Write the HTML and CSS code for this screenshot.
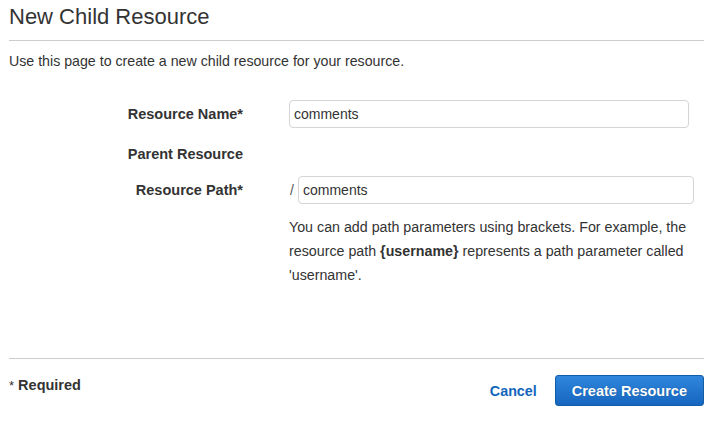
FILE: index.html
```html
<!DOCTYPE html>
<html lang="en">
<head>
<meta charset="utf-8">
<title>New Child Resource</title>
<link rel="stylesheet" href="styles.css">
</head>
<body>
<div class="page">
  <h1 class="title">New Child Resource</h1>
  <p class="intro">Use this page to create a new child resource for your resource.</p>
  <form class="form">
    <div class="row row-name">
      <label class="label" for="rname">Resource Name*</label>
      <div class="field"><input id="rname" class="input" type="text" value="comments"></div>
    </div>
    <div class="row row-parent">
      <span class="label">Parent Resource</span>
      <div class="field"></div>
    </div>
    <div class="row row-path">
      <label class="label" for="rpath">Resource Path*</label>
      <div class="field path-field"><span class="slash">/</span><input id="rpath" class="input path-input" type="text" value="comments"></div>
    </div>
    <div class="row row-help">
      <span class="label"></span>
      <p class="help">You can add path parameters using brackets. For example, the resource path <b class="code">{username}</b> represents a path parameter called 'username'.</p>
    </div>
  </form>
  <div class="footer">
    <div class="required"><span class="star">*</span> Required</div>
    <div class="actions">
      <button class="btn-cancel" type="button">Cancel</button>
      <button class="btn-primary" type="button">Create Resource</button>
    </div>
  </div>
</div>
</body>
</html>
```

FILE: styles.css
```css
html, body {
  margin: 0;
  padding: 0;
  background: #ffffff;
}

body {
  font-family: "Liberation Sans", Arial, sans-serif;
  color: #333333;
  font-size: 14px;
}

.page {
  padding: 0 19px 0 9px;
}

.title {
  margin: 0;
  padding: 4px 0 10px;
  font-size: 22px;
  line-height: 26px;
  font-weight: normal;
  color: #333333;
  border-bottom: 1px solid #cccccc;
}

.intro {
  margin: 11px 0 0;
  font-size: 14.2px;
  line-height: 18px;
}

.form {
  display: flex;
  flex-direction: column;
}

.row {
  display: flex;
  align-items: center;
  column-gap: 46px;
}

.label {
  width: 234px;
  flex: none;
  text-align: right;
  font-weight: bold;
  font-size: 14.5px;
  line-height: 20px;
}

.field {
  display: flex;
  align-items: center;
}

.row-name {
  margin-top: 30px;
}

.row-parent {
  margin-top: 16px;
}

.row-path {
  margin-top: 12px;
}

.row-help {
  margin-top: 11px;
  align-items: flex-start;
}

.input {
  box-sizing: border-box;
  width: 400px;
  height: 28px;
  margin: 0;
  padding: 0 4px;
  border: 1px solid #d5d5d5;
  border-radius: 4px;
  font-family: "Liberation Sans", Arial, sans-serif;
  font-size: 14px;
  color: #333333;
  background: #ffffff;
  outline: none;
}

.slash {
  width: 8px;
  padding-left: 1px;
  font-size: 14px;
  color: #555555;
}

.path-input {
  width: 396px;
}

.help {
  margin: 0;
  width: 402px;
  font-size: 14.25px;
  line-height: 24px;
  color: #333333;
}

.code {
  font-weight: bold;
}

.footer {
  margin-top: 71px;
  border-top: 1px solid #cccccc;
  padding-top: 16px;
  display: flex;
  justify-content: space-between;
  align-items: flex-start;
}

.required {
  font-weight: bold;
  font-size: 14.5px;
  line-height: 20px;
}

.star {
  font-weight: normal;
  font-size: 13px;
}

.actions {
  display: flex;
  align-items: center;
  column-gap: 2px;
}

.btn-cancel {
  height: 31px;
  padding: 0 16px 0 15px;
  border: none;
  background: transparent;
  font-family: "Liberation Sans", Arial, sans-serif;
  font-size: 14.3px;
  font-weight: bold;
  color: #1166bb;
  cursor: pointer;
}

.btn-primary {
  box-sizing: border-box;
  height: 31px;
  padding: 0 16px;
  border: 1px solid #135ca8;
  border-radius: 3px;
  background: linear-gradient(#2f86dc, #1666c0);
  font-family: "Liberation Sans", Arial, sans-serif;
  font-size: 14.5px;
  font-weight: bold;
  color: #ffffff;
  text-shadow: 0 0 1px rgba(0, 0, 0, 0.35);
  cursor: pointer;
}
```
